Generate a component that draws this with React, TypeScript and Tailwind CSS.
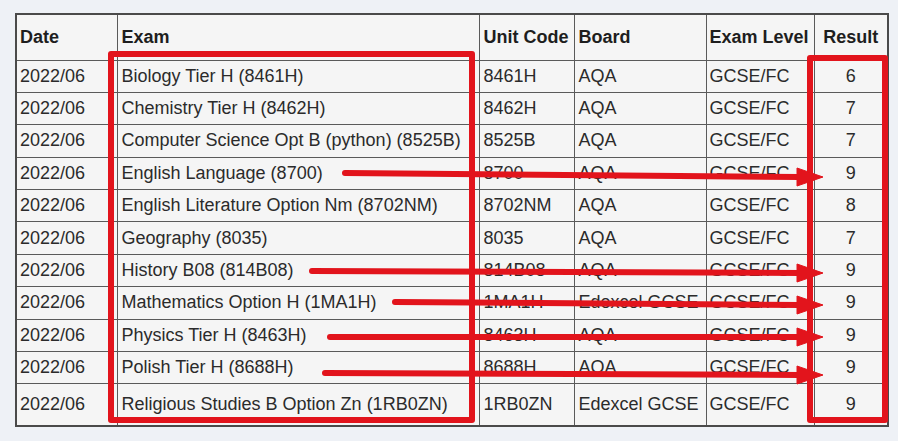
const rows = [
  ['2022/06', 'Biology Tier H (8461H)', '8461H', 'AQA', 'GCSE/FC', '6'],
  ['2022/06', 'Chemistry Tier H (8462H)', '8462H', 'AQA', 'GCSE/FC', '7'],
  ['2022/06', 'Computer Science Opt B (python) (8525B)', '8525B', 'AQA', 'GCSE/FC', '7'],
  ['2022/06', 'English Language (8700)', '8700', 'AQA', 'GCSE/FC', '9'],
  ['2022/06', 'English Literature Option Nm (8702NM)', '8702NM', 'AQA', 'GCSE/FC', '8'],
  ['2022/06', 'Geography (8035)', '8035', 'AQA', 'GCSE/FC', '7'],
  ['2022/06', 'History B08 (814B08)', '814B08', 'AQA', 'GCSE/FC', '9'],
  ['2022/06', 'Mathematics Option H (1MA1H)', '1MA1H', 'Edexcel GCSE', 'GCSE/FC', '9'],
  ['2022/06', 'Physics Tier H (8463H)', '8463H', 'AQA', 'GCSE/FC', '9'],
  ['2022/06', 'Polish Tier H (8688H)', '8688H', 'AQA', 'GCSE/FC', '9'],
  ['2022/06', 'Religious Studies B Option Zn (1RB0ZN)', '1RB0ZN', 'Edexcel GCSE', 'GCSE/FC', '9'],
]

// hand-drawn arrows: [startX, startY, endY]
const arrows = [
  [345, 173, 177],
  [312, 271, 273],
  [395, 302, 305],
  [330, 337, 337],
  [325, 373, 375],
]

export default function App() {
  return (
    <div className="relative w-[898px] h-[441px] overflow-hidden bg-[#eef1f6] pt-[13px] pl-[15px] font-['Liberation_Sans',Arial,sans-serif] text-[18px] text-[#2b2b2b]">
      <table className="table-fixed border-collapse bg-[#f5f5f5] border-2 border-[#4a4a4a]">
        <colgroup>
          <col className="w-[101px]" />
          <col className="w-[362px]" />
          <col className="w-[95px]" />
          <col className="w-[132px]" />
          <col className="w-[108px]" />
          <col className="w-[74px]" />
        </colgroup>
        <thead>
          <tr className="h-[46px] font-bold text-[#1e1e1e]">
            <th className="border-[1.5px] border-[#5a5a5a] text-left pl-[3px] font-bold">Date</th>
            <th className="border-[1.5px] border-[#5a5a5a] text-left pl-[4px] font-bold">Exam</th>
            <th className="border-[1.5px] border-[#5a5a5a] text-left pl-[4px] font-bold whitespace-nowrap">Unit Code</th>
            <th className="border-[1.5px] border-[#5a5a5a] text-left pl-[4px] font-bold">Board</th>
            <th className="border-[1.5px] border-[#5a5a5a] text-left pl-[3px] font-bold whitespace-nowrap">Exam Level</th>
            <th className="border-[1.5px] border-[#5a5a5a] text-center font-bold">Result</th>
          </tr>
        </thead>
        <tbody>
          {rows.map((r, i) => (
            <tr key={i} className={i === rows.length - 1 ? 'h-[42px]' : 'h-[32.4px]'}>
              <td className="border-[1.5px] border-[#5a5a5a] pl-[3px] whitespace-nowrap">{r[0]}</td>
              <td className="border-[1.5px] border-[#5a5a5a] pl-[4px] whitespace-nowrap">{r[1]}</td>
              <td className="border-[1.5px] border-[#5a5a5a] pl-[4px] whitespace-nowrap">{r[2]}</td>
              <td className="border-[1.5px] border-[#5a5a5a] pl-[4px] whitespace-nowrap">{r[3]}</td>
              <td className="border-[1.5px] border-[#5a5a5a] pl-[3px] whitespace-nowrap">{r[4]}</td>
              <td className="border-[1.5px] border-[#5a5a5a] text-center">{r[5]}</td>
            </tr>
          ))}
        </tbody>
      </table>

      {/* red annotation boxes */}
      <div className="absolute left-[108px] top-[51px] w-[367px] h-[372px] border-[6px] border-[#e2141c] rounded-[3px]" />
      <div className="absolute left-[807px] top-[55px] w-[81px] h-[368px] border-[6px] border-[#e2141c] rounded-[3px]" />

      <svg className="absolute inset-0 pointer-events-none" width="898" height="441" viewBox="0 0 898 441">
        {arrows.map(([x, y1, y2], i) => (
          <g key={i} fill="#e2141c" stroke="#e2141c">
            <line x1={x} y1={y1} x2={800} y2={y2} strokeWidth="6" strokeLinecap="round" />
            <polygon points={`797,${y2 - 9} 823,${y2} 797,${y2 + 9}`} strokeWidth="1" strokeLinejoin="round" />
          </g>
        ))}
      </svg>
    </div>
  )
}
